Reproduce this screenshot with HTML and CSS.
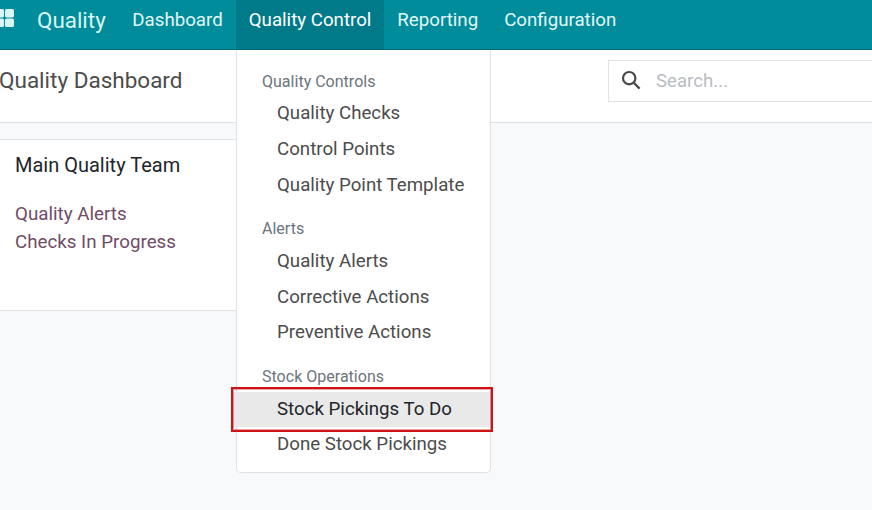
FILE: index.html
```html
<!DOCTYPE html>
<html lang="en">
<head>
<meta charset="utf-8">
<title>Quality Dashboard</title>
<link rel="stylesheet" href="styles.css">
</head>
<body>
<header class="navbar">
  <svg class="apps-icon" width="14" height="18" viewBox="0 0 14 18" aria-hidden="true">
    <rect x="-5" y="0" width="9" height="8.4" rx="1.6"/>
    <rect x="5" y="0" width="9" height="8.4" rx="1.6"/>
    <rect x="-5" y="9.6" width="9" height="8.4" rx="1.6"/>
    <rect x="5" y="9.6" width="9" height="8.4" rx="1.6"/>
  </svg>
  <span class="brand">Quality</span>
  <nav class="nav-items">
    <a class="nav-item">Dashboard</a>
    <a class="nav-item nav-item-open">Quality Control</a>
    <a class="nav-item">Reporting</a>
    <a class="nav-item">Configuration</a>
  </nav>
</header>
<section class="control-panel">
  <h1 class="page-title">Quality Dashboard</h1>
  <div class="search-box">
    <svg class="search-icon" width="20" height="20" viewBox="0 0 20 20" aria-hidden="true">
      <circle cx="8.2" cy="8.2" r="6.2"/>
      <path d="M12.8 12.8 L18.6 18.6"/>
    </svg>
    <span class="search-placeholder">Search...</span>
  </div>
</section>
<main class="content">
  <article class="team-card">
    <h2 class="team-name">Main Quality Team</h2>
    <a class="team-link">Quality Alerts</a>
    <a class="team-link">Checks In Progress</a>
  </article>
</main>
<div class="dropdown">
  <div class="dropdown-header">Quality Controls</div>
  <a class="dropdown-item">Quality Checks</a>
  <a class="dropdown-item">Control Points</a>
  <a class="dropdown-item">Quality Point Template</a>
  <div class="dropdown-header dropdown-header-next">Alerts</div>
  <a class="dropdown-item">Quality Alerts</a>
  <a class="dropdown-item">Corrective Actions</a>
  <a class="dropdown-item">Preventive Actions</a>
  <div class="dropdown-header dropdown-header-next">Stock Operations</div>
  <a class="dropdown-item dropdown-item-active">Stock Pickings To Do</a>
  <a class="dropdown-item">Done Stock Pickings</a>
</div>
<div class="annotation"></div>
</body>
</html>
```
FILE: styles.css
```css
* { box-sizing: border-box; }
html, body { height: 100%; }
body {
  margin: 0;
  height: 510px;
  overflow: hidden;
  display: flex;
  flex-direction: column;
  background: #f8f9fa;
  font-family: Roboto, "Liberation Sans", sans-serif;
  color: #4c4c4c;
}
.navbar {
  height: 50px;
  flex: none;
  display: flex;
  align-items: flex-start;
  background: #008c9b;
  border-bottom: 1px solid #006b77;
  color: #fff;
}
.apps-icon { flex: none; margin-top: 9px; fill: #d9f5f5; }
.brand {
  margin-left: 23px;
  font-size: 22.4px;
  line-height: 41px;
  color: #d8f6f4;
}
.nav-items { display: flex; margin-left: 13.6px; }
.nav-item {
  height: 49px;
  padding: 0 13px;
  font-size: 18.7px;
  line-height: 41px;
  color: #e2f7f6;
}
.nav-item-open { background: #007a88; color: #fff; }
.control-panel {
  height: 73px;
  flex: none;
  display: flex;
  justify-content: space-between;
  background: #fff;
  border-bottom: 1px solid #dee2e6;
}
.page-title {
  margin: 16px 0 0 -1px;
  font-size: 22.5px;
  font-weight: 400;
  line-height: 29px;
  color: #4c4c4c;
}
.search-box {
  width: 280px;
  height: 42px;
  margin: 10px -16px 0 0;
  padding-left: 12px;
  display: flex;
  align-items: center;
  border: 1px solid #dee2e6;
  background: #fff;
}
.search-icon { flex: none; margin-top: -2px; fill: none; stroke: #454748; stroke-width: 2.2; }
.search-placeholder { margin-left: 15px; font-size: 18.66px; color: #b9bdc2; }
.content { flex: 1; padding-top: 16px; }
.team-card {
  width: 236px;
  height: 172px;
  padding: 12px 15px;
  background: #fff;
  border-top: 1px solid #dee2e6;
  border-bottom: 1px solid #dee2e6;
}
.team-name {
  margin: 0 0 21px;
  font-size: 20px;
  font-weight: 400;
  line-height: 27px;
  color: #212529;
}
.team-link {
  display: block;
  font-size: 18.75px;
  line-height: 28px;
  color: #714b67;
}
.dropdown {
  position: absolute;
  left: 236px;
  top: 50px;
  width: 255px;
  height: 423px;
  padding-top: 18.75px;
  background: #fff;
  border: 1px solid #dee2e6;
  border-top: 0;
  border-radius: 0 0 5px 5px;
}
.dropdown-header {
  height: 27.3px;
  padding-left: 25px;
  font-size: 16.05px;
  line-height: 26.7px;
  color: #6c757d;
}
.dropdown-header-next { height: 28.65px; margin-top: 11.9px; line-height: 27.3px; }
.dropdown-item {
  display: block;
  height: 35.75px;
  padding-left: 40px;
  font-size: 18.7px;
  line-height: 35.75px;
  color: #4c4c4c;
}
.dropdown-item-active { margin-left: -4px; padding-left: 44px; background: #e9e9e9; color: #212529; }
.annotation {
  position: absolute;
  left: 231px;
  top: 387px;
  width: 262px;
  height: 45px;
  border: 2px solid #cc1418;
  box-shadow: inset 0 0 0 1px rgba(204, 20, 24, 0.4);
}
```
